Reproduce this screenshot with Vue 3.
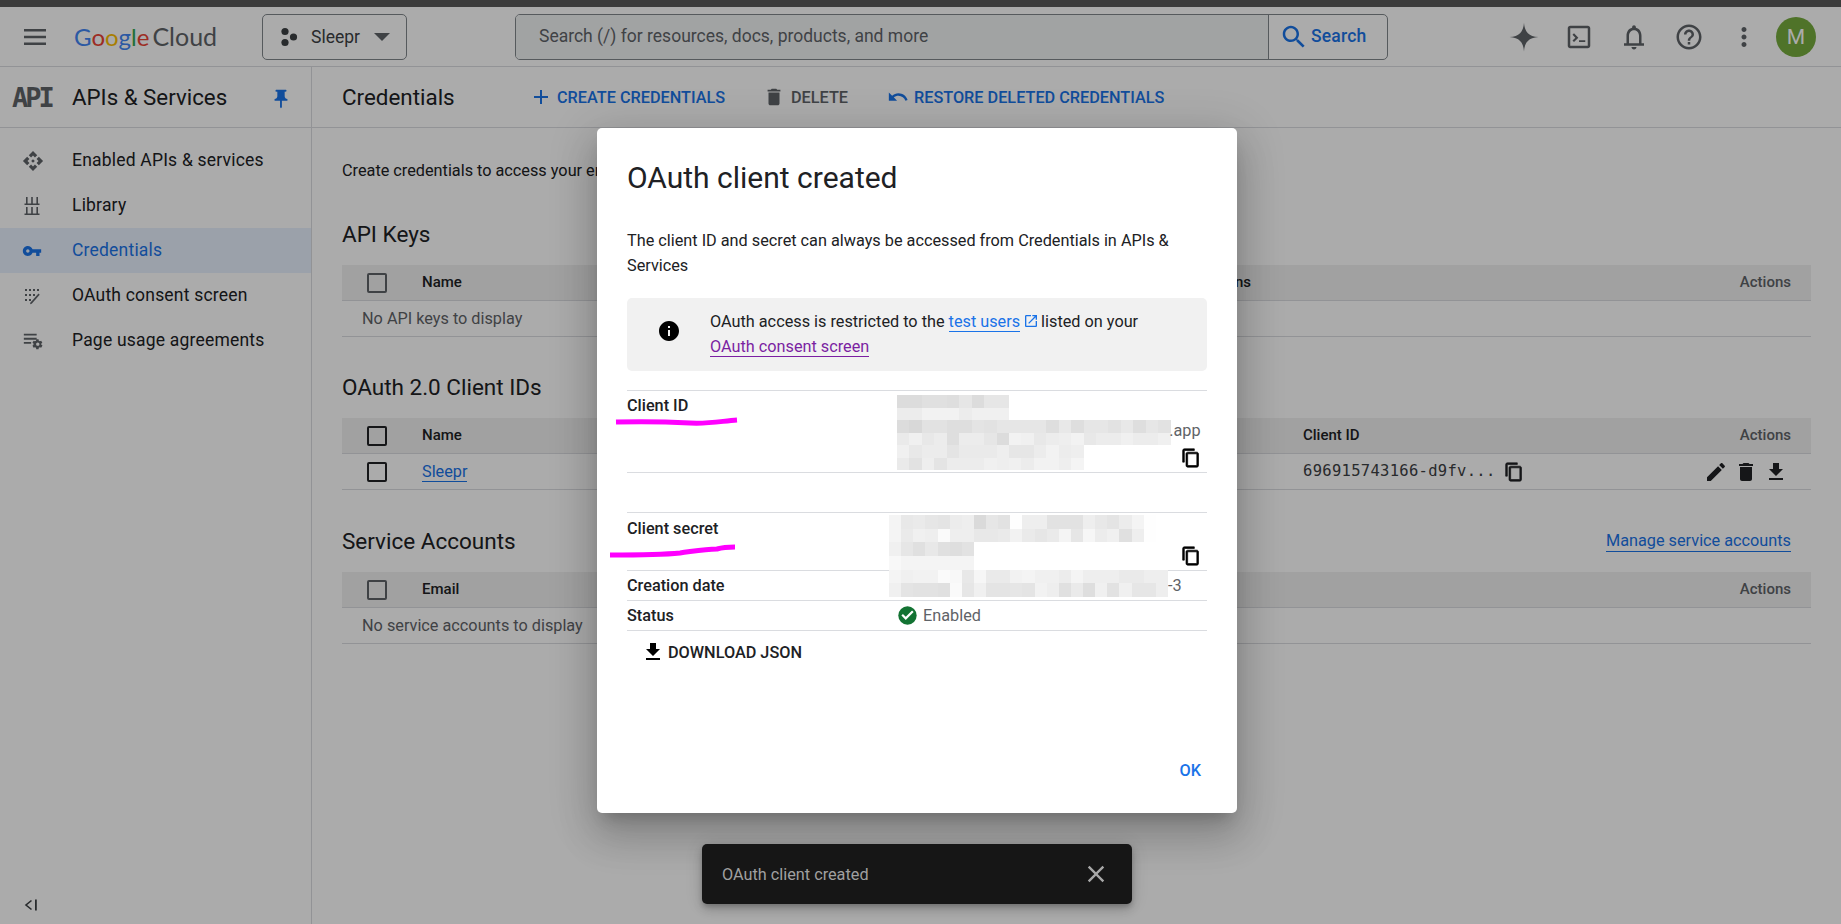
<script setup>
const navItems = [
  { label: 'Enabled APIs & services', icon: 'api' },
  { label: 'Library', icon: 'library' },
  { label: 'Credentials', icon: 'key', active: true },
  { label: 'OAuth consent screen', icon: 'consent' },
  { label: 'Page usage agreements', icon: 'usage' }
]

const idRows = [
  'dc dc e0 e0 de e6 dc e6 e6',
  'ec ec f2 f2 f2 ec f0 f0 f0',
  'dc d8 e2 e2 de de e4 e2 e6 e6 e6 e6 de e8 de e6 e6 e2 e8 de e6 e2',
  'ea f0 e8 ec de ec ec e6 dc f2 f0 e8 ec ee f2 e8 ec ec f0 ec ec f0',
  'f0 e8 ec ec e4 ea ea ea ee e6 e6 ec f2 ec ee',
  'ea e2 ee e4 ec ec ec f0 ee f0 ec f2 f2 ee f4'
]
const secretRows = [
  'f4 e8 ea e6 e4 ec ee da e6 e2 fe ee ee e2 e2 e2 ee e8 e4 ec f4 fe',
  'f4 ea f0 ee fa ee ee e8 e8 ea f2 ea e6 ea f4 e6 f6 ec f0 e0 ee fe',
  'f0 e6 e0 e8 e0 de e2',
  'f8 f4 f4 f4 f4 f4 f4',
  'f4 f0 f2 f2 fa f8 e8 f6 ea ea f2 f4 f0 f0 ec f4 ee ee ee ea ea ee ee',
  'f0 e4 e2 e2 e0 fa e6 f0 e4 e4 e6 e4 f2 ee e0 ea de f0 e2 f0 e6 e6 ee'
]
const cells = rows =>
  rows.flatMap((row, r) =>
    row.split(' ').map((v, c) => ({
      id: r + '-' + c,
      background: '#' + v + v + v,
      gridRow: r + 1,
      gridColumn: c + 1
    }))
  )
const idCells = cells(idRows)
const secretCells = cells(secretRows)
</script>

<template>
  <div class="page">
    <div class="strip"></div>

    <header class="topbar">
      <svg class="menu" viewBox="0 0 24 24" width="24" height="24"><path d="M1 4h22v2.4H1zM1 10.800h22v2.400H1zM1 17.600h22V20H1z" /></svg>
      <div class="logo">
        <span class="lb">G</span><span class="lr">o</span><span class="ly">o</span><span class="lb">g</span><span class="lg">l</span><span class="lr">e</span>
        <span class="cloud">Cloud</span>
      </div>
      <button class="project">
        <svg viewBox="0 0 20 20" width="20" height="20"><circle cx="6" cy="4.500" r="3.600" /><circle cx="14.500" cy="10" r="3.600" /><circle cx="6" cy="15.500" r="3.600" /></svg>
        <span>Sleepr</span>
        <i class="caret"></i>
      </button>
      <div class="search">
        <div class="search-input">Search (/) for resources, docs, products, and more</div>
        <div class="search-btn">
          <svg viewBox="0 0 24 24" width="30" height="30"><path d="M15.500 14h-.79l-.28-.27C15.410 12.590 16 11.110 16 9.500 16 5.910 13.090 3 9.500 3S3 5.910 3 9.500 5.910 16 9.500 16c1.610 0 3.090-.59 4.230-1.570l.27.28v.79l5 4.990L20.490 19l-4.990-5zm-6 0C7.010 14 5 11.990 5 9.500S7.010 5 9.500 5 14 7.010 14 9.500 11.990 14 9.500 14z" /></svg>
          <span>Search</span>
        </div>
      </div>
      <div class="tools">
        <svg class="tool" viewBox="0 0 24 24" width="30" height="30"><path d="M12 .5C12.500 8 16 11.500 23.500 12 16 12.500 12.500 16 12 23.500 11.500 16 8 12.500 .5 12 8 11.500 11.500 8 12 .5Z" /></svg>
        <svg class="tool" viewBox="0 0 24 24" width="30" height="30"><path d="M5 3h14c1.100 0 2 .9 2 2v14c0 1.100-.9 2-2 2H5c-1.100 0-2-.9-2-2V5c0-1.100.9-2 2-2zm0 2v14h14V5H5zm1.800 5.200L8 9l3.500 3.500L8 16l-1.200-1.200 2.300-2.300-2.300-2.300zM12 14.500h5V16h-5z" /></svg>
        <svg class="tool" viewBox="0 0 24 24" width="30" height="30"><path d="M12 22c1.100 0 2-.9 2-2h-4c0 1.100.9 2 2 2zm6-6v-5c0-3.070-1.630-5.640-4.500-6.320V4c0-.83-.67-1.500-1.500-1.500s-1.500.67-1.500 1.500v.68C7.640 5.360 6 7.920 6 11v6H4v2h16v-2h-2zm-2 1H8v-6c0-2.480 1.510-4.500 4-4.500s4 2.020 4 4.500v6z" /></svg>
        <svg class="tool" viewBox="0 0 24 24" width="30" height="30"><path d="M11 18h2v-2h-2v2zm1-16C6.480 2 2 6.480 2 12s4.480 10 10 10 10-4.480 10-10S17.520 2 12 2zm0 18c-4.410 0-8-3.590-8-8s3.590-8 8-8 8 3.590 8 8-3.590 8-8 8zm0-14c-2.210 0-4 1.790-4 4h2c0-1.100.9-2 2-2s2 .9 2 2c0 2-3 1.750-3 5h2c0-2.250 3-2.500 3-5 0-2.210-1.790-4-4-4z" /></svg>
        <svg class="tool" viewBox="0 0 24 24" width="30" height="30"><path d="M12 8c1.100 0 2-.9 2-2s-.9-2-2-2-2 .9-2 2 .9 2 2 2zm0 2c-1.100 0-2 .9-2 2s.9 2 2 2 2-.9 2-2-.9-2-2-2zm0 6c-1.100 0-2 .9-2 2s.9 2 2 2 2-.9 2-2-.9-2-2-2z" /></svg>
        <div class="avatar">M</div>
      </div>
    </header>

    <div class="body">
      <aside class="sidebar">
        <div class="side-head">
          <span class="api-logo">API</span>
          <span class="side-title">APIs &amp; Services</span>
          <svg class="pin" viewBox="0 0 24 24" width="22" height="22"><path d="M16 9V4h1c.55 0 1-.45 1-1s-.45-1-1-1H7c-.55 0-1 .45-1 1s.45 1 1 1h1v5c0 1.660-1.340 3-3 3v2h5.970v7l1 1 1-1v-7H19v-2c-1.660 0-3-1.340-3-3z" /></svg>
        </div>
        <nav class="nav">
          <a v-for="item in navItems" :key="item.label" class="nav-item" :class="{ active: item.active }">
            <span class="nav-icon">
              <svg v-if="item.icon === 'api'" viewBox="0 0 24 24" width="22" height="22"><path d="M14 12l-2 2-2-2 2-2 2 2zm-2-6l2.120 2.120 2.500-2.500L12 1 7.380 5.620l2.500 2.500L12 6zm-6 6l2.120-2.120-2.500-2.500L1 12l4.620 4.620 2.500-2.500L6 12zm12 0l-2.120 2.120 2.500 2.500L23 12l-4.620-4.620-2.500 2.500L18 12zm-6 6l-2.120-2.120-2.500 2.500L12 23l4.620-4.620-2.500-2.500L12 18z" /></svg>
              <svg v-else-if="item.icon === 'library'" viewBox="0 0 20 20" width="20" height="20"><path d="M4 1h1.600v6.500H4zM9.200 1h1.600v6.500H9.200zM14.400 1H16v6.500h-1.600zM2.500 7.500h15V9h-15zM4 11h1.600v6.500H4zM9.200 11h1.600v6.500H9.200zM14.400 11H16v6.500h-1.600zM2.500 17.500h15V19h-15z" /></svg>
              <svg v-else-if="item.icon === 'key'" viewBox="0 0 24 24" width="20" height="20"><path d="M12.650 10C11.830 7.670 9.610 6 7 6c-3.310 0-6 2.690-6 6s2.690 6 6 6c2.610 0 4.830-1.670 5.650-4H17v4h4v-4h2v-4H12.650zM7 14c-1.100 0-2-.9-2-2s.9-2 2-2 2 .9 2 2-.9 2-2 2z" /></svg>
              <svg v-else-if="item.icon === 'consent'" viewBox="0 0 20 20" width="20" height="20"><path d="M3 3h2v2H3zM7 3h2v2H7zM11 3h2v2h-2zM15 3h2v2h-2zM3 8h2v2H3zM7 8h2v2H7zM11 8h2v2h-2zM3 13h2v2H3zM7 13h2v2H7z" /><path d="M16.500 7.500l1.200 1.200-8 9-1.700.5.500-1.700z" /></svg>
              <svg v-else viewBox="0 0 24 24" width="22" height="22"><path d="M2 4h14v2H2zM2 8.500h14v2H2zM2 13h8v2H2z" /><path d="M22.200 16.700l-1.200-.5c0-.3.1-.5.1-.7s0-.5-.1-.7l1.200-.9-1.300-2.200-1.400.6c-.4-.3-.8-.5-1.200-.7l-.2-1.500h-2.600l-.2 1.500c-.4.2-.8.400-1.200.7l-1.400-.6-1.300 2.200 1.200.9c0 .2-.1.500-.1.700s0 .4.100.7l-1.200.9 1.300 2.200 1.400-.6c.4.3.8.5 1.200.7l.2 1.500h2.600l.2-1.500c.4-.2.8-.4 1.200-.7l1.400.6 1.300-2.200zM17.200 17.300c-1 0-1.800-.8-1.800-1.800s.8-1.800 1.800-1.800 1.800.8 1.800 1.800-.8 1.800-1.800 1.800z" /></svg>
            </span>
            <span>{{ item.label }}</span>
          </a>
        </nav>
        <svg class="collapse" viewBox="0 0 16 16" width="16" height="16"><path d="M8.500 3.500L3 8l5.500 4.500" fill="none" stroke="#3c4043" stroke-width="1.600" /><path d="M12 2.500h1.800v11H12z" /></svg>
      </aside>

      <main class="main">
        <div class="main-head">
          <h1>Credentials</h1>
          <a class="act act-create">
            <svg viewBox="0 0 24 24" width="24" height="24"><path d="M19 13h-6v6h-2v-6H5v-2h6V5h2v6h6v2z" /></svg>CREATE CREDENTIALS
          </a>
          <a class="act act-delete">
            <svg viewBox="0 0 24 24" width="22" height="22"><path d="M6 19c0 1.100.9 2 2 2h8c1.100 0 2-.9 2-2V7H6v12zM19 4h-3.500l-1-1h-5l-1 1H5v2h14V4z" /></svg>DELETE
          </a>
          <a class="act act-restore">
            <svg viewBox="0 0 24 24" width="22" height="22"><path d="M12.500 8c-2.650 0-5.050.99-6.900 2.600L2 7v9h9l-3.620-3.620c1.390-1.160 3.160-1.880 5.120-1.880 3.540 0 6.550 2.310 7.600 5.500l2.370-.78C21.080 11.030 17.150 8 12.500 8z" /></svg>RESTORE DELETED CREDENTIALS
          </a>
        </div>

        <div class="content">
          <p class="intro">Create credentials to access your enabled APIs. Learn more</p>

          <div class="sec-head"><h2>API Keys</h2></div>
          <div class="table">
            <div class="tr th">
              <span class="cb-col"><i class="cb off"></i></span>
              <span class="name-col">Name</span>
              <span class="restr">Restrictions</span>
              <span class="act-col wide">Actions</span>
            </div>
            <div class="tr"><span class="empty">No API keys to display</span></div>
          </div>

          <div class="sec-head sec-two"><h2>OAuth 2.0 Client IDs</h2></div>
          <div class="table">
            <div class="tr th">
              <span class="cb-col"><i class="cb"></i></span>
              <span class="name-col">Name</span>
              <span class="id-col">Client ID</span>
              <span class="act-col">Actions</span>
            </div>
            <div class="tr">
              <span class="cb-col"><i class="cb"></i></span>
              <span class="name-col"><a class="link">Sleepr</a></span>
              <span class="id-col mono">696915743166-d9fv...
                <svg viewBox="0 0 24 24" width="20" height="20"><path d="M16 1H4c-1.100 0-2 .9-2 2v14h2V3h12V1zm3 4H8c-1.100 0-2 .9-2 2v14c0 1.100.9 2 2 2h11c1.100 0 2-.9 2-2V7c0-1.100-.9-2-2-2zm0 16H8V7h11v14z" /></svg>
              </span>
              <span class="act-col icons">
                <svg viewBox="0 0 24 24" width="24" height="24"><path d="M3 17.250V21h3.750L17.810 9.940l-3.750-3.750L3 17.250zM20.710 7.040c.39-.39.39-1.020 0-1.410l-2.340-2.340c-.39-.39-1.020-.39-1.410 0l-1.830 1.830 3.750 3.750 1.830-1.830z" /></svg>
                <svg viewBox="0 0 24 24" width="24" height="24"><path d="M6 19c0 1.100.9 2 2 2h8c1.100 0 2-.9 2-2V7H6v12zM19 4h-3.500l-1-1h-5l-1 1H5v2h14V4z" /></svg>
                <svg viewBox="0 0 24 24" width="24" height="24"><path d="M19 9h-4V3H9v6H5l7 7 7-7zM5 18v2h14v-2H5z" /></svg>
              </span>
            </div>
          </div>

          <div class="sec-head">
            <h2>Service Accounts</h2>
            <a class="link manage">Manage service accounts</a>
          </div>
          <div class="table">
            <div class="tr th">
              <span class="cb-col"><i class="cb off"></i></span>
              <span class="name-col">Email</span>
              <span class="act-col">Actions</span>
            </div>
            <div class="tr"><span class="empty">No service accounts to display</span></div>
          </div>
        </div>
      </main>
    </div>

    <div class="backdrop"></div>

    <section class="dialog">
      <h3>OAuth client created</h3>
      <p class="desc">The client ID and secret can always be accessed from Credentials in APIs &amp; Services</p>
      <div class="notice">
        <svg class="notice-icon" viewBox="0 0 24 24" width="24" height="24"><path d="M12 2C6.480 2 2 6.480 2 12s4.480 10 10 10 10-4.480 10-10S17.520 2 12 2zm1 15h-2v-6h2v6zm0-8h-2V7h2v2z" /></svg>
        <div class="notice-text">
          OAuth access is restricted to the <a class="dlink">test users</a><svg class="ext" viewBox="0 0 24 24" width="16" height="16"><path d="M19 19H5V5h7V3H5c-1.110 0-2 .9-2 2v14c0 1.100.89 2 2 2h14c1.100 0 2-.9 2-2v-7h-2v7zM14 3v2h3.590l-9.830 9.830 1.410 1.410L19 6.410V10h2V3h-7z" /></svg> listed on your<br />
          <a class="vlink">OAuth consent screen</a>
        </div>
      </div>

      <div class="row row-id">
        <span class="label">Client ID</span>
        <div class="value id-value">
          <div class="mosaic mosaic-id">
            <i v-for="c in idCells" :key="c.id" :style="{ background: c.background, gridRow: c.gridRow, gridColumn: c.gridColumn }"></i>
          </div>
          <div class="id-side">
            <span>.app</span>
            <svg class="copy" viewBox="0 0 24 24" width="20" height="20"><path d="M16 1H4c-1.100 0-2 .9-2 2v14h2V3h12V1zm3 4H8c-1.100 0-2 .9-2 2v14c0 1.100.9 2 2 2h11c1.100 0 2-.9 2-2V7c0-1.100-.9-2-2-2zm0 16H8V7h11v14z" /></svg>
          </div>
        </div>
      </div>

      <div class="row row-secret">
        <span class="label">Client secret</span>
        <div class="value secret-value">
          <svg class="copy" viewBox="0 0 24 24" width="20" height="20"><path d="M16 1H4c-1.100 0-2 .9-2 2v14h2V3h12V1zm3 4H8c-1.100 0-2 .9-2 2v14c0 1.100.9 2 2 2h11c1.100 0 2-.9 2-2V7c0-1.100-.9-2-2-2zm0 16H8V7h11v14z" /></svg>
        </div>
      </div>
      <div class="row row-plain">
        <span class="label">Creation date</span>
        <div class="value date-value">-3</div>
      </div>
      <div class="row row-plain row-end">
        <span class="label">Status</span>
        <div class="value status-value">
          <svg viewBox="0 0 24 24" width="21" height="21"><circle cx="12" cy="12" r="10.500" fill="#137333" /><path d="M10 17l-5-5 1.800-1.800 3.200 3.200 7.200-7.200L19 8z" fill="#fff" /></svg>
          Enabled
        </div>
      </div>

      <a class="download">
        <svg viewBox="0 0 24 24" width="24" height="24"><path d="M19 9h-4V3H9v6H5l7 7 7-7zM5 18v2h14v-2H5z" /></svg>
        DOWNLOAD JSON
      </a>

      <div class="dialog-actions"><a class="ok">OK</a></div>

      <div class="mosaic mosaic-secret">
        <i v-for="c in secretCells" :key="c.id" :style="{ background: c.background, gridRow: c.gridRow, gridColumn: c.gridColumn }"></i>
      </div>
    </section>

    <svg class="scribble" viewBox="0 0 1841 924" width="1841" height="924">
      <path d="M616 422 C650 421 672 422 690 423 C710 424 722 421 737 420" />
      <path d="M610 555 C640 555 660 555 680 553 C695 551 705 549 717 549 C724 547 728 547 735 547" />
    </svg>

    <div class="snackbar">
      <span>OAuth client created</span>
      <svg viewBox="0 0 24 24" width="28" height="28"><path d="M19 6.410L17.590 5 12 10.590 6.410 5 5 6.410 10.590 12 5 17.590 6.410 19 12 13.410 17.590 19 19 17.590 13.410 12z" /></svg>
    </div>
  </div>
</template>

<style scoped>
.page {
  position: relative;
  width: 1841px;
  height: 924px;
  overflow: hidden;
  display: flex;
  flex-direction: column;
  background: #fff;
  color: #202124;
  font-family: Roboto, "Liberation Sans", sans-serif;
  font-size: 16.25px;
  line-height: 25px;
}
a { text-decoration: none; }
h1, h2, h3, p { margin: 0; font-weight: 400; }
i { display: block; }

.strip { height: 7px; background: #5a5a5a; flex: none; }

.topbar {
  height: 60px;
  flex: none;
  display: flex;
  align-items: center;
  border-bottom: 1px solid #dadce0;
  box-sizing: border-box;
  padding-left: 23px;
  fill: #5f6368;
}
.menu { fill: #5f6368; flex: none; }
.logo {
  margin-left: 27px;
  width: 188px;
  font-family: Lato, Roboto, sans-serif;
  font-size: 24px;
  letter-spacing: 0;
  white-space: nowrap;
  flex: none;
}
.lb { color: #4285f4; }
.lr { color: #ea4335; }
.ly { color: #fbbc04; }
.lg { color: #34a853; }
.cloud { color: #5f6368; margin-left: 3px; font-size: 25px; }
.project {
  width: 145px;
  height: 46px;
  flex: none;
  display: flex;
  align-items: center;
  padding: 0 0 0 16px;
  border: 1px solid #80868b;
  border-radius: 5px;
  background: #fff;
  font-family: inherit;
  font-size: 17.5px;
  color: #3c4043;
}
.project svg { fill: #3c4043; flex: none; }
.project span { margin-left: 12px; }
.caret {
  width: 0;
  height: 0;
  margin-left: 14px;
  border-left: 8px solid transparent;
  border-right: 8px solid transparent;
  border-top: 8px solid #5f6368;
}
.search {
  width: 873px;
  height: 46px;
  margin-left: 108px;
  flex: none;
  display: flex;
  border: 1px solid #80868b;
  border-radius: 5px;
  box-sizing: border-box;
  overflow: hidden;
}
.search-input {
  flex: 1;
  background: #f1f3f4;
  color: #5f6368;
  font-size: 17.5px;
  line-height: 42px;
  padding-left: 23px;
}
.search-btn {
  width: 119px;
  display: flex;
  align-items: center;
  border-left: 1px solid #80868b;
  padding-left: 10px;
  box-sizing: border-box;
  color: #1a73e8;
  font-weight: 500;
  font-size: 17.5px;
  letter-spacing: .2px;
  gap: 2px;
}
.search-btn svg { fill: #1a73e8; }
.tools {
  flex: 1;
  display: flex;
  align-items: center;
  padding-left: 121px;
}
.tool { fill: #5f6368; margin-right: 25px; flex: none; }
.avatar {
  width: 40px;
  height: 40px;
  margin-left: -8px;
  border-radius: 50%;
  background: #76ac3e;
  color: #fff;
  font-size: 21px;
  line-height: 40px;
  text-align: center;
}

.body { flex: 1; display: flex; min-height: 0; }

.sidebar {
  width: 312px;
  flex: none;
  box-sizing: border-box;
  border-right: 1px solid #dadce0;
  display: flex;
  flex-direction: column;
}
.side-head {
  height: 61px;
  flex: none;
  box-sizing: border-box;
  display: flex;
  align-items: center;
  border-bottom: 1px solid #dadce0;
  padding-left: 12px;
}
.api-logo {
  width: 60px;
  font-family: "DejaVu Sans Mono", monospace;
  font-weight: 700;
  font-size: 27px;
  letter-spacing: -3px;
  color: #5f6368;
}
.side-title { font-size: 22.3px; flex: 1; }
.pin { fill: #1a73e8; margin: 3px 19px 0 0; }
.nav { padding-top: 10px; }
.nav-item {
  height: 45px;
  display: flex;
  align-items: center;
  font-size: 17.5px;
  letter-spacing: .2px;
  color: #202124;
}
.nav-icon {
  width: 72px;
  padding-left: 22px;
  box-sizing: border-box;
  display: flex;
  fill: #5f6368;
}
.nav-icon svg { display: block; }
.nav-item.active { background: #e8f0fe; color: #1a73e8; }
.nav-item.active .nav-icon { fill: #1a73e8; }
.collapse { margin: auto 0 11px 23px; fill: #3c4043; flex: none; }

.main { flex: 1; min-width: 0; }
.main-head {
  height: 61px;
  box-sizing: border-box;
  display: flex;
  align-items: center;
  padding-left: 30px;
  border-bottom: 1px solid #dadce0;
}
.main-head h1 { font-size: 22.4px; width: 187px; }
.act {
  display: flex;
  align-items: center;
  gap: 4px;
  font-weight: 500;
  font-size: 16.25px;
  color: #1a73e8;
  fill: #1a73e8;
  white-space: nowrap;
}
.act-create { width: 234px; }
.act-delete { width: 124px; gap: 6px; color: #5f6368; fill: #5f6368; }
.act-restore { gap: 5px; }
.content { padding: 30px 30px 0; }
.intro { font-size: 16.25px; white-space: nowrap; }
.sec-head {
  height: 30px;
  margin: 36px 0 16px;
  display: flex;
  align-items: center;
  justify-content: space-between;
}
.sec-two { margin-top: 35px; }
.sec-head h2 { font-size: 22.5px; line-height: 30px; }
.table { font-size: 16.25px; }
.tr {
  height: 36px;
  box-sizing: border-box;
  display: flex;
  align-items: center;
  border-bottom: 1px solid #dadce0;
}
.th { background: #f1f1f1; font-size: 15px; font-weight: 500; }
.cb-col { width: 80px; padding-left: 25px; box-sizing: border-box; flex: none; }
.cb {
  width: 20px;
  height: 20px;
  box-sizing: border-box;
  border: 2px solid #202124;
  border-radius: 2px;
}
.cb.off { border-color: #5f6368; }
.name-col { flex: 1; min-width: 0; }
.restr { width: 200px; text-align: right; }
.id-col { width: 320px; flex: none; display: flex; align-items: center; }
.mono {
  font-family: "DejaVu Sans Mono", monospace;
  font-size: 15.5px;
  letter-spacing: .3px;
  color: #3c4043;
  gap: 8px;
  white-space: nowrap;
}
.mono svg { fill: #202124; stroke: #202124; stroke-width: .8; flex: none; }
.act-col {
  width: 188px;
  flex: none;
  box-sizing: border-box;
  padding-right: 20px;
  text-align: right;
  color: #5f6368;
}
.act-col.wide { width: 560px; }
.icons { display: flex; justify-content: flex-end; gap: 6px; padding-right: 23px; fill: #202124; }
.empty { padding-left: 20px; color: #5f6368; }
.link { color: #1a73e8; border-bottom: 1px solid #1a73e8; line-height: 21px; }
.manage { margin-right: 20px; }

.backdrop { position: absolute; inset: 0; background: rgba(0, 0, 0, .33); }

.dialog {
  position: absolute;
  left: 597px;
  top: 128px;
  width: 640px;
  height: 685px;
  box-sizing: border-box;
  padding: 30px 30px 30px;
  display: flex;
  flex-direction: column;
  background: #fff;
  border-radius: 5px;
  box-shadow: 0 11px 15px -7px rgba(0,0,0,.2), 0 24px 38px 3px rgba(0,0,0,.14), 0 9px 46px 8px rgba(0,0,0,.12);
}
.dialog h3 { font-size: 30px; line-height: 40px; }
.desc { margin-top: 30px; font-size: 16.25px; }
.notice {
  height: 73px;
  margin-top: 20px;
  box-sizing: border-box;
  display: flex;
  align-items: center;
  padding-left: 30px;
  background: #f1f1f1;
  border-radius: 5px;
  flex: none;
}
.notice-icon { margin-bottom: 7px; }
.notice-text { margin: 0 0 2px 29px; }
.dlink { color: #1a73e8; border-bottom: 1px solid #1a73e8; }
.vlink { color: #7b1fa2; border-bottom: 1px solid #7b1fa2; }
.ext { fill: #1a73e8; vertical-align: -2px; margin: 0 -2px 0 3px; }
.row {
  display: flex;
  flex: none;
  border-top: 1px solid #dadce0;
  box-sizing: border-box;
}
.label { width: 270px; flex: none; font-weight: 500; }
.value { flex: 1; color: #5f6368; }
.row-id {
  height: 83px;
  margin-top: 19px;
  padding-top: 2px;
  border-bottom: 1px solid #dadce0;
}
.id-value { display: flex; padding-top: 2px; }
.mosaic { display: grid; }
.mosaic-id { grid-template-columns: repeat(22, 12.45px); grid-auto-rows: 12.5px; }
.id-side {
  display: flex;
  flex-direction: column;
  align-items: flex-end;
  width: 30px;
  padding-top: 23px;
  line-height: 25px;
}
.copy { fill: #000; stroke: #000; stroke-width: .8; flex: none; display: block; }
.id-side .copy { margin-top: 5px; }
.row-secret { height: 58px; margin-top: 39px; padding-top: 3px; }
.secret-value { display: flex; justify-content: flex-end; align-items: flex-end; padding: 0 6px 4px 0; }
.row-plain { height: 30px; align-items: center; }
.row-end { border-bottom: 1px solid #dadce0; height: 31px; }
.date-value { padding-left: 271px; }
.status-value { display: flex; align-items: center; gap: 5px; }
.download {
  margin: 8px 0 0 14px;
  height: 26px;
  display: flex;
  align-items: center;
  gap: 3px;
  font-weight: 500;
  color: #202124;
  font-size: 16.25px;
}
.dialog-actions { margin-top: auto; display: flex; justify-content: flex-end; padding-right: 6px; }
.ok { color: #1a73e8; font-weight: 500; }
.mosaic-secret {
  position: absolute;
  left: 292px;
  top: 387px;
  grid-template-columns: repeat(23, 12.13px);
  grid-auto-rows: 13.67px;
}

.scribble { position: absolute; left: 0; top: 0; pointer-events: none; }
.scribble path { fill: none; stroke: #ff00ff; stroke-width: 5; stroke-linecap: butt; }

.snackbar {
  position: absolute;
  left: 702px;
  top: 844px;
  width: 430px;
  height: 60px;
  box-sizing: border-box;
  display: flex;
  align-items: center;
  justify-content: space-between;
  padding: 0 22px 0 20px;
  background: #161616;
  border-radius: 5px;
  color: #a0a0a0;
  font-size: 16.25px;
  box-shadow: 0 3px 5px -1px rgba(0,0,0,.2), 0 6px 10px rgba(0,0,0,.14), 0 1px 18px rgba(0,0,0,.12);
}
.snackbar svg { fill: #a8a8a8; }
</style>
